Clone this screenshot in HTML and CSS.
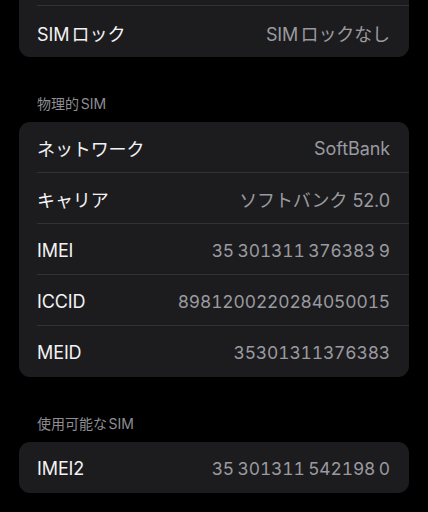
FILE: index.html
```html
<!DOCTYPE html>
<html lang="ja">
<head>
<meta charset="utf-8">
<link rel="stylesheet" href="styles.css">
</head>
<body>
<main class="page">
  <section class="card card-top">
    <div class="row row-hidden"></div>
    <div class="row"><span class="label">SIMロック</span><span class="value">SIMロックなし</span></div>
  </section>

  <h2 class="section-title">物理的SIM</h2>
  <section class="card">
    <div class="row"><span class="label">ネットワーク</span><span class="value">SoftBank</span></div>
    <div class="row"><span class="label">キャリア</span><span class="value">ソフトバンク 52.0</span></div>
    <div class="row"><span class="label">IMEI</span><span class="value num">35 301311 376383 9</span></div>
    <div class="row"><span class="label">ICCID</span><span class="value num">8981200220284050015</span></div>
    <div class="row"><span class="label">MEID</span><span class="value num">35301311376383</span></div>
  </section>

  <h2 class="section-title">使用可能なSIM</h2>
  <section class="card">
    <div class="row"><span class="label">IMEI2</span><span class="value num">35 301311 542198 0</span></div>
  </section>
</main>
</body>
</html>
```

FILE: styles.css
```css
html, body {
  margin: 0;
  padding: 0;
  background: #000;
}

body {
  font-family: "Inter", "Noto Sans CJK JP", sans-serif;
  -webkit-font-smoothing: antialiased;
  overflow: hidden;
  height: 512px;
}

.page {
  padding: 0 19px;
  display: flex;
  flex-direction: column;
}

.card {
  background: #1c1c1e;
  border-radius: 11px;
  overflow: hidden;
}

.card-top {
  margin-top: -45px;
}

.row {
  height: 51px;
  box-sizing: border-box;
  margin-left: 18px;
  padding-right: 19px;
  display: flex;
  align-items: center;
  justify-content: space-between;
  border-bottom: 1px solid #323235;
  font-size: 18px;
  letter-spacing: -0.1px;
  text-autospace: normal;
}

.row:last-child {
  border-bottom: none;
}

.label {
  color: #f2f2f4;
  padding-top: 2px;
}

.value {
  color: #9a9aa0;
  padding-top: 2px;
}

.num {
  font-size: 17.4px;
  font-variant-numeric: tabular-nums;
  word-spacing: -1px;
}

.section-title {
  margin: 38px 0 9px 18px;
  font-size: 14px;
  line-height: 18px;
  font-weight: 400;
  color: #8e8e93;
  font-feature-settings: "palt";
  text-autospace: normal;
}
```
